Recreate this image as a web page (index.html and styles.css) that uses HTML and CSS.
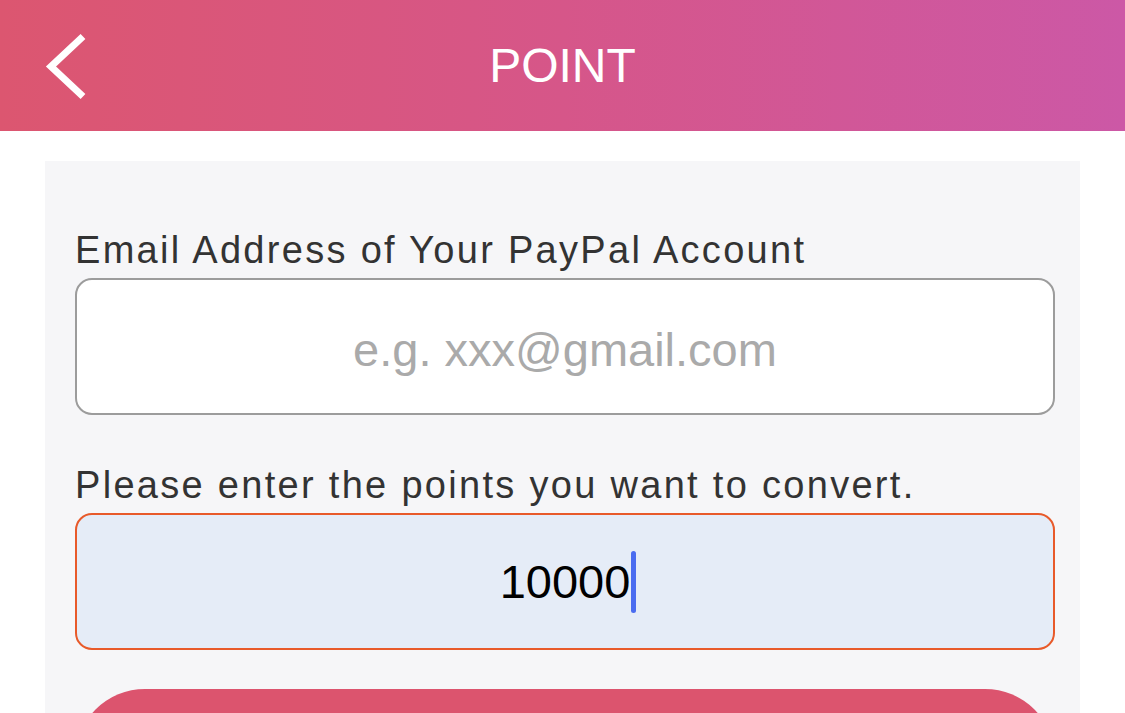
FILE: index.html
```html
<!DOCTYPE html>
<html lang="en">
<head>
    <meta charset="UTF-8">
    <meta name="viewport" content="width=device-width, initial-scale=1.0">
    <title>POINT</title>
    <link rel="stylesheet" href="styles.css">
</head>
<body>
<header class="top-bar">
    <a class="back" href="#">
        <svg width="50" height="70" viewBox="0 0 50 70">
            <polyline points="43,5.5 11,35.5 43,65.5" fill="none" stroke="#fff" stroke-width="7"/>
        </svg>
    </a>
    <h1>POINT</h1>
    <span></span>
</header>
<main class="panel">
    <label class="field-label" for="email">Email Address of Your PayPal Account</label>
    <input class="field" id="email" type="email" placeholder="e.g. xxx@gmail.com">

    <label class="field-label label-points">Please enter the points you want to convert.</label>
    <div class="field field-active">
        <span>10000</span><span class="caret"></span>
    </div>

    <button class="submit" aria-label="Apply"></button>
</main>
</body>
</html>
```

FILE: styles.css
```css
body {
    margin: 0;
    font-family: 'Liberation Sans', Arial, sans-serif;
    background: #fff;
}

.top-bar {
    height: 131px;
    display: grid;
    grid-template-columns: 1fr auto 1fr;
    align-items: center;
    background: linear-gradient(to right, #dc5670, #d65689 50%, #cc58a6);
}

.back {
    display: flex;
    margin-left: 40px;
    width: 50px;
}

.top-bar h1 {
    margin: 0;
    font-size: 48px;
    font-weight: normal;
    color: #fff;
}

.panel {
    margin: 30px 45px 0;
    padding: 66px 25px 40px 30px;
    background: #f6f6f8;
    display: flex;
    flex-direction: column;
}

.field-label {
    font-size: 38px;
    line-height: 46px;
    letter-spacing: 2.3px;
    color: #333;
    margin-bottom: 5px;
}

.label-points {
    margin-top: 47px;
}

.field {
    box-sizing: border-box;
    height: 137px;
    border: 2px solid #9c9c9c;
    border-radius: 17px;
    background: #fff;
    font-family: 'Liberation Sans', Arial, sans-serif;
    font-size: 47px;
    text-align: center;
    color: #000;
    outline: none;
    padding-top: 6px;
}

.field::placeholder {
    color: #aaa;
}

.field-active {
    border: 2.5px solid #e85a2a;
    background: #e5ecf7;
    display: flex;
    align-items: center;
    justify-content: center;
    padding: 0 0 0 6px;
}

.caret {
    display: inline-block;
    width: 5px;
    height: 62px;
    margin-left: 1px;
    border-radius: 3px;
    background: #4a6cf0;
}

.submit {
    margin-top: 39px;
    height: 140px;
    border: none;
    border-radius: 70px;
    background: #dc546e;
}
```
